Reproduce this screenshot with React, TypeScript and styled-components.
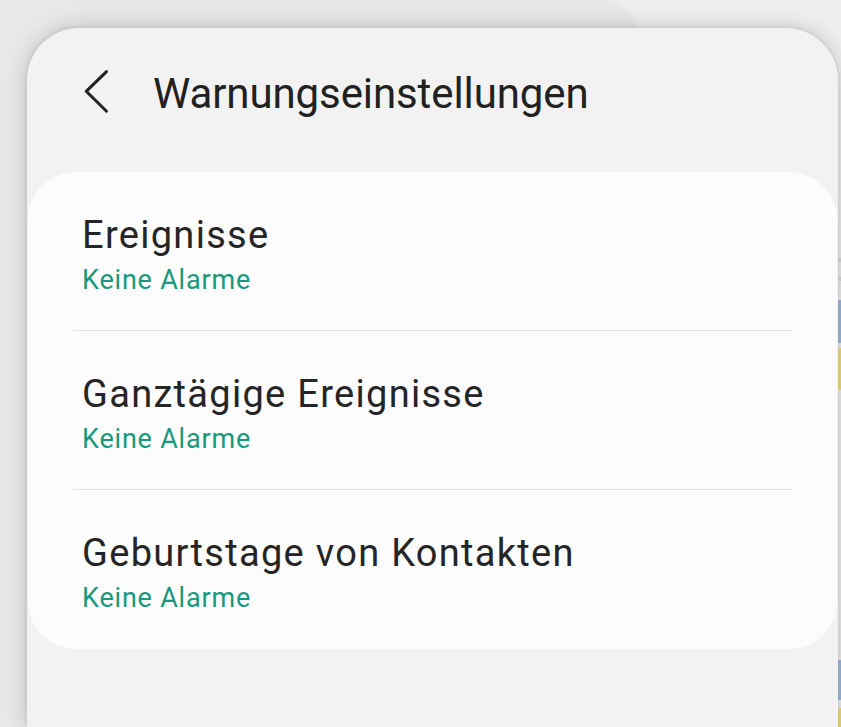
import { createGlobalStyle, styled } from "styled-components";

const GlobalStyle = createGlobalStyle`
  html, body {
    margin: 0;
    padding: 0;
    background: #eeeeee;
    font-family: Roboto, "Noto Sans", "Liberation Sans", sans-serif;
  }
  #root {
    width: 841px;
    height: 727px;
    overflow: hidden;
  }
`;

const alarmItems = [
  { id: "events", title: "Ereignisse", status: "Keine Alarme" },
  { id: "allDay", title: "Ganztägige Ereignisse", status: "Keine Alarme" },
  { id: "birthdays", title: "Geburtstage von Kontakten", status: "Keine Alarme" },
];

const stripBits = [
  { top: 258, height: 4, color: "#c4c4c4" },
  { top: 277, height: 4, color: "#c4c4c4" },
  { top: 300, height: 43, color: "#8ea8c6" },
  { top: 348, height: 42, color: "#d7c67c" },
  { top: 660, height: 40, color: "#8ea8c6" },
  { top: 708, height: 19, color: "#d7c67c" },
];

const Stage = styled.div`
  position: relative;
  display: flex;
  flex-direction: row;
  align-items: flex-start;
  width: 841px;
  height: 727px;
  padding: 28px 0 0 27px;
  box-sizing: border-box;
  background: #efefef;
`;

/* the sheet lying underneath, only its top edge peeks out */
const BackSheet = styled.div`
  position: absolute;
  left: -60px;
  top: 1px;
  width: 698px;
  height: 760px;
  border-radius: 0 44px 0 0;
  background: #e8e8e8;
  box-shadow: 0 0 10px rgba(0, 0, 0, 0.08);
`;

const Panel = styled.div`
  position: relative;
  width: 811px;
  height: 699px;
  display: flex;
  flex-direction: column;
  background: #f2f2f2;
  border-radius: 52px 52px 0 0;
  box-shadow: 0 0 22px rgba(0, 0, 0, 0.2), 0 0 4px rgba(0, 0, 0, 0.1);
`;

const SideStrip = styled.div`
  position: relative;
  width: 3px;
  align-self: stretch;
  margin-top: -28px;
`;

const StripBit = styled.div<{ $color: string }>`
  position: absolute;
  left: 0;
  width: 3px;
  background: ${(p) => p.$color};
`;

const Header = styled.div`
  display: flex;
  flex-direction: row;
  align-items: flex-start;
  height: 144px;
  box-sizing: border-box;
  padding: 41px 0 0 53px;
`;

const BackButton = styled.button`
  display: flex;
  align-items: center;
  justify-content: center;
  width: 30px;
  height: 50px;
  padding: 0;
  border: none;
  background: transparent;
  cursor: pointer;
`;

const Title = styled.h1`
  margin: 0 0 0 43px;
  font-size: 42px;
  line-height: 50px;
  font-weight: 400;
  color: #212121;
  letter-spacing: -0.1px;
`;

const Card = styled.ul`
  list-style: none;
  margin: 0 1px 0 1px;
  padding: 0;
  background: #fcfcfc;
  border-radius: 48px;
  overflow: hidden;
`;

const Row = styled.li<{ $divider: boolean }>`
  display: flex;
  flex-direction: column;
  height: 159px;
  box-sizing: border-box;
  padding-top: 41px;
  border-bottom: ${(p) => (p.$divider ? "1px solid #e3e3e3" : "none")};
  margin: 0 ${(p) => (p.$divider ? "45px" : "0")};
  padding-left: ${(p) => (p.$divider ? "9px" : "54px")};
`;

const RowTitle = styled.div`
  font-size: 38px;
  line-height: 44px;
  letter-spacing: 1.3px;
  color: #252525;
`;

const RowStatus = styled.div`
  margin-top: 7px;
  font-size: 27px;
  line-height: 32px;
  letter-spacing: 0.8px;
  color: #18997d;
`;

const App = () => {
  return (
    <>
      <GlobalStyle />
      <Stage>
        <BackSheet />
        <Panel>
          <Header>
            <BackButton aria-label="Zurück">
              <svg width="30" height="50" viewBox="0 0 30 50" fill="none">
                <path
                  d="M26.5 2.6 L6.2 22.3 L26.5 42.2"
                  stroke="#222222"
                  strokeWidth="3"
                  strokeLinecap="round"
                  strokeLinejoin="round"
                />
              </svg>
            </BackButton>
            <Title>Warnungseinstellungen</Title>
          </Header>
          <Card>
            {alarmItems.map((el, i) => (
              <Row key={el.id} $divider={i < alarmItems.length - 1}>
                <RowTitle>{el.title}</RowTitle>
                <RowStatus>{el.status}</RowStatus>
              </Row>
            ))}
          </Card>
        </Panel>
        <SideStrip>
          {stripBits.map((b) => (
            <StripBit key={b.top} $color={b.color} style={{ top: b.top, height: b.height }} />
          ))}
        </SideStrip>
      </Stage>
    </>
  );
};

export default App;
